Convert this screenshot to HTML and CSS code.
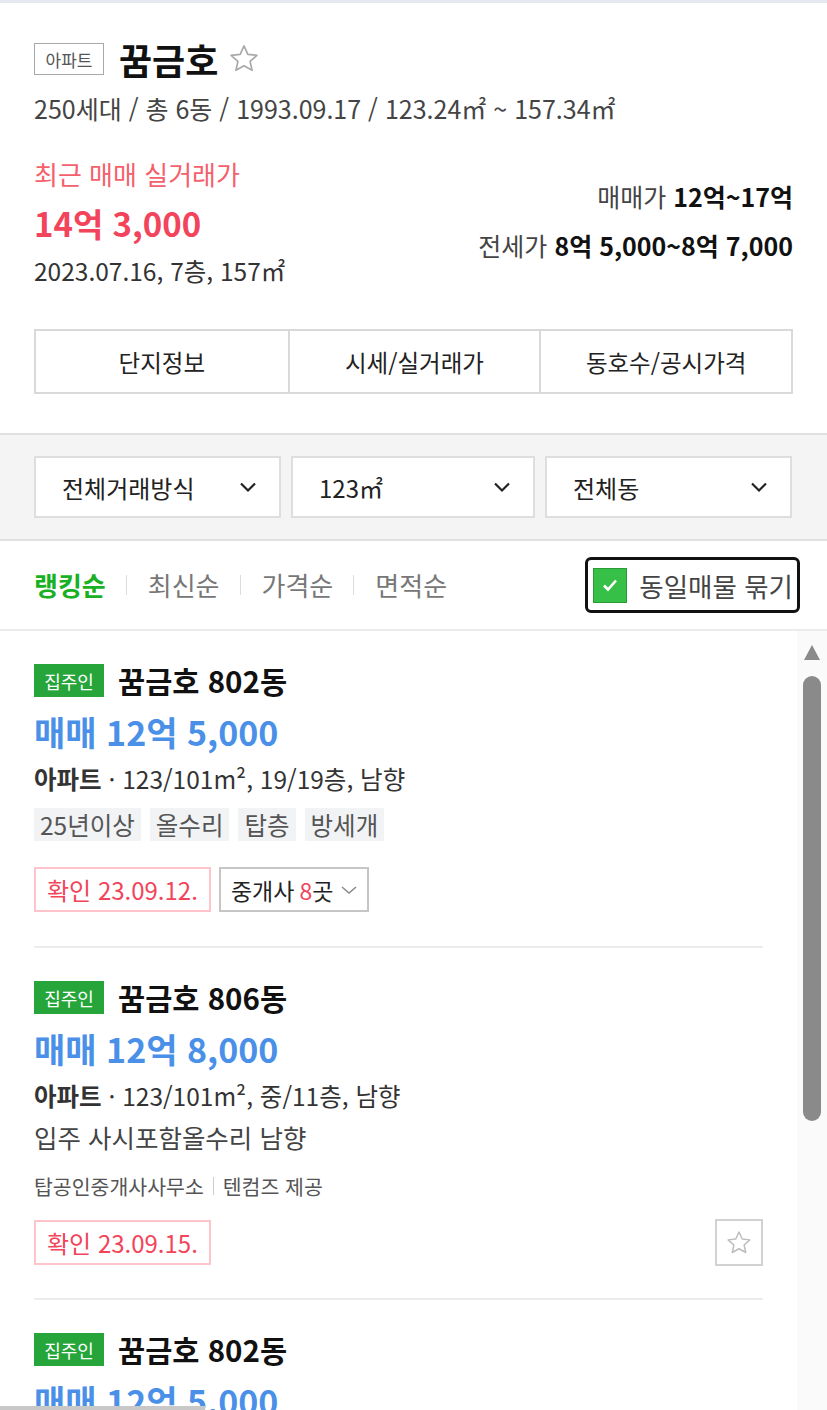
FILE: index.html
```html
<!DOCTYPE html>
<html lang="ko">
<head>
    <meta charset="UTF-8">
    <meta name="viewport" content="width=device-width, initial-scale=1.0">
    <title>꿈금호 - 단지 매물</title>
    <link rel="stylesheet" href="styles.css">
</head>
<body>
    <div class="page">
        <!-- 단지 요약 -->
        <section class="summary">
            <div class="title-row">
                <span class="type-badge">아파트</span>
                <h1 class="complex-name">꿈금호</h1>
                <button class="fav-title" aria-label="관심단지">
                    <svg width="34" height="34" viewBox="0 0 24 24"><path d="M12 2.8l2.7 5.9 6.4.7-4.8 4.3 1.4 6.3L12 16.8 6.3 20l1.4-6.3-4.8-4.3 6.4-.7z" fill="none" stroke="#a9a9a9" stroke-width="1.2" stroke-linejoin="round"/></svg>
                </button>
            </div>
            <p class="spec">250세대 / 총 6동 / 1993.09.17 / 123.24㎡ ~ 157.34㎡</p>

            <div class="price-row">
                <div class="recent">
                    <p class="recent-label">최근 매매 실거래가</p>
                    <p class="recent-price">14억 3,000</p>
                    <p class="recent-meta">2023.07.16, 7층, 157㎡</p>
                </div>
                <div class="ranges">
                    <p><span class="range-label">매매가</span> <strong>12억~17억</strong></p>
                    <p><span class="range-label">전세가</span> <strong>8억 5,000~8억 7,000</strong></p>
                </div>
            </div>

            <nav class="tabs">
                <a href="#">단지정보</a>
                <a href="#">시세/실거래가</a>
                <a href="#">동호수/공시가격</a>
            </nav>
        </section>

        <!-- 필터 -->
        <section class="filters">
            <button class="select">전체거래방식<svg class="chev" width="18" height="12" viewBox="0 0 18 12"><path d="M2 2.5l7 7 7-7" fill="none" stroke="#222" stroke-width="2.2"/></svg></button>
            <button class="select">123㎡<svg class="chev" width="18" height="12" viewBox="0 0 18 12"><path d="M2 2.5l7 7 7-7" fill="none" stroke="#222" stroke-width="2.2"/></svg></button>
            <button class="select">전체동<svg class="chev" width="18" height="12" viewBox="0 0 18 12"><path d="M2 2.5l7 7 7-7" fill="none" stroke="#222" stroke-width="2.2"/></svg></button>
        </section>

        <!-- 정렬 -->
        <div class="sort-bar">
            <ul class="sorts">
                <li class="active">랭킹순</li>
                <li>최신순</li>
                <li>가격순</li>
                <li>면적순</li>
            </ul>
            <label class="group-check">
                <span class="box"><svg width="22" height="22" viewBox="0 0 22 22"><path d="M5 11.5l4 4 8-9" fill="none" stroke="#fff" stroke-width="2.6"/></svg></span>
                동일매물 묶기
            </label>
        </div>

        <!-- 매물 목록 -->
        <div class="list-wrap">
            <ul class="articles">
                <li class="article">
                    <div class="article-title"><span class="owner-badge">집주인</span><h2>꿈금호 802동</h2></div>
                    <p class="article-price">매매 12억 5,000</p>
                    <p class="article-spec"><strong>아파트</strong> · 123/101m², 19/19층, 남향</p>
                    <div class="tags">
                        <span>25년이상</span><span>올수리</span><span>탑층</span><span>방세개</span>
                    </div>
                    <div class="article-foot">
                        <span class="confirm">확인 23.09.12.</span>
                        <button class="agents">중개사 <em>8</em>곳<svg width="18" height="10" viewBox="0 0 18 10"><path d="M2 2l7 6 7-6" fill="none" stroke="#888" stroke-width="1.5"/></svg></button>
                    </div>
                </li>
                <li class="article">
                    <div class="article-title"><span class="owner-badge">집주인</span><h2>꿈금호 806동</h2></div>
                    <p class="article-price">매매 12억 8,000</p>
                    <p class="article-spec"><strong>아파트</strong> · 123/101m², 중/11층, 남향</p>
                    <p class="article-desc">입주 사시포함올수리 남향</p>
                    <p class="agency">탑공인중개사사무소<span class="bar"></span>텐컴즈 제공</p>
                    <div class="article-foot">
                        <span class="confirm">확인 23.09.15.</span>
                        <button class="fav-item" aria-label="관심매물">
                            <svg width="30" height="30" viewBox="0 0 24 24"><path d="M12 3.2l2.6 5.6 6.1.7-4.6 4.1 1.3 6L12 16.6 6.6 19.6l1.3-6-4.6-4.1 6.1-.7z" fill="none" stroke="#bdbdbd" stroke-width="1.2" stroke-linejoin="round"/></svg>
                        </button>
                    </div>
                </li>
                <li class="article">
                    <div class="article-title"><span class="owner-badge">집주인</span><h2>꿈금호 802동</h2></div>
                    <p class="article-price">매매 12억 5,000</p>
                </li>
            </ul>
            <div class="scrollbar">
                <span class="scroll-up"></span>
                <span class="scroll-thumb"></span>
            </div>
        </div>
        <div class="hscroll"></div>
    </div>
</body>
</html>
```

FILE: styles.css
```css
:root {
    --red: #f2445a;
    --blue: #4a90e8;
    --green: #25a53a;
}

* {
    margin: 0;
    padding: 0;
    box-sizing: border-box;
}

body {
    font-family: 'Noto Sans CJK KR', 'Noto Sans', sans-serif;
    color: #222;
    background: #fff;
    overflow: hidden;
}

ul {
    list-style: none;
}

button {
    font-family: inherit;
    background: none;
    border: none;
    cursor: pointer;
}

.page {
    position: relative;
    width: 827px;
    height: 1410px;
    overflow: hidden;
    border-top: 3px solid #e6e8ef;
}

/* 단지 요약 */
.summary {
    padding: 40px 34px 39px;
}

.title-row {
    display: flex;
    align-items: center;
    height: 32px;
}

.type-badge {
    display: inline-flex;
    align-items: center;
    justify-content: center;
    width: 70px;
    height: 32px;
    border: 1px solid #a8a8a8;
    font-size: 17px;
    color: #555;
}

.complex-name {
    margin-left: 15px;
    font-size: 36px;
    font-weight: 700;
    line-height: 1;
    color: #111;
}

.fav-title {
    display: flex;
    margin-left: 9px;
}

.spec {
    margin-top: 18px;
    font-size: 25px;
    line-height: 30px;
    color: #444;
}

.price-row {
    display: flex;
    justify-content: space-between;
    align-items: flex-start;
    margin-top: 35px;
}

.recent-label {
    font-size: 26px;
    line-height: 32px;
    color: #f4606c;
}

.recent-price {
    margin-top: 13px;
    font-size: 33px;
    font-weight: 700;
    line-height: 40px;
    color: var(--red);
}

.recent-meta {
    margin-top: 13px;
    font-size: 24.5px;
    line-height: 30px;
    color: #333;
}

.ranges {
    margin-top: 23px;
    text-align: right;
    font-size: 25px;
    line-height: 30px;
}

.ranges p + p {
    margin-top: 19px;
}

.range-label {
    color: #444;
}

.ranges strong {
    color: #111;
}

.tabs {
    display: grid;
    grid-template-columns: repeat(3, 1fr);
    margin-top: 43px;
    border: 2px solid #d9d9d9;
    height: 65px;
}

.tabs a {
    display: flex;
    align-items: center;
    justify-content: center;
    font-size: 23.5px;
    color: #222;
    text-decoration: none;
}

.tabs a + a {
    border-left: 2px solid #d9d9d9;
}

/* 필터 */
.filters {
    display: grid;
    grid-template-columns: 247px 244px 247px;
    gap: 10px;
    padding: 21px 34px;
    background: #f4f4f4;
    border-top: 2px solid #e0e0e0;
    border-bottom: 2px solid #e0e0e0;
}

.select {
    display: flex;
    align-items: center;
    justify-content: space-between;
    height: 62px;
    padding: 0 22px 0 26px;
    background: #fff;
    border: 2px solid #dedede;
    font-size: 24px;
    color: #222;
}

/* 정렬 */
.sort-bar {
    display: flex;
    align-items: center;
    justify-content: space-between;
    height: 90px;
    padding: 0 27px 0 34px;
    border-bottom: 2px solid #ebebeb;
}

.sorts {
    display: flex;
    align-items: center;
}

.sorts li {
    display: flex;
    align-items: center;
    font-size: 26px;
    line-height: 32px;
    color: #777;
}

.sorts li + li::before {
    content: '';
    width: 1px;
    height: 20px;
    margin: 0 21px 0 20px;
    background: #dcdcdc;
}

.sorts li.active {
    color: #19b024;
    font-weight: 700;
}

.group-check {
    display: flex;
    align-items: center;
    gap: 12px;
    height: 56px;
    padding: 0 4px 0 5px;
    border: 3px solid #111;
    border-radius: 6px;
    font-size: 26.5px;
    color: #444;
}

.group-check .box {
    display: flex;
    align-items: center;
    justify-content: center;
    width: 34px;
    height: 35px;
    background: #37c047;
    border: 1px solid #2b9a37;
}

/* 매물 목록 */
.list-wrap {
    display: flex;
}

.articles {
    flex: 1;
    padding: 0 34px;
}

.article {
    padding: 33px 0 34px;
    border-bottom: 2px solid #ececec;
}

.article:nth-child(2) {
    padding-bottom: 32px;
}

.article-title {
    display: flex;
    align-items: center;
    gap: 14px;
}

.owner-badge {
    display: inline-flex;
    align-items: center;
    justify-content: center;
    width: 70px;
    height: 33px;
    background: var(--green);
    color: #fff;
    font-size: 18px;
}

.article-title h2 {
    font-size: 29.5px;
    font-weight: 700;
    line-height: 1;
    color: #111;
}

.article-price {
    margin-top: 15px;
    font-size: 34px;
    font-weight: 700;
    line-height: 40px;
    color: var(--blue);
}

.article-spec {
    margin-top: 12px;
    font-size: 24.5px;
    line-height: 30px;
    color: #333;
}

.article-spec strong {
    font-weight: 700;
}

.tags {
    display: flex;
    gap: 9px;
    margin-top: 14px;
}

.tags span {
    display: inline-flex;
    align-items: center;
    height: 33px;
    padding: 0 6px;
    background: #f2f3f5;
    font-size: 24.5px;
    color: #555;
}

.article-desc {
    margin-top: 11px;
    font-size: 25.5px;
    line-height: 30px;
    color: #444;
}

.agency {
    display: flex;
    align-items: center;
    margin-top: 21px;
    font-size: 20.5px;
    line-height: 26px;
    color: #555;
}

.agency .bar {
    width: 1px;
    height: 18px;
    margin: 0 9px;
    background: #ccc;
}

.article-foot {
    display: flex;
    align-items: center;
    gap: 8px;
    margin-top: 26px;
}

.article:nth-child(2) .article-foot {
    margin-top: 20px;
}

.confirm {
    display: inline-flex;
    align-items: center;
    height: 45px;
    padding: 0 11px;
    border: 2px solid #ffc4cb;
    font-size: 24px;
    color: var(--red);
}

.agents {
    display: inline-flex;
    align-items: center;
    gap: 7px;
    height: 45px;
    padding: 0 9px 0 10px;
    border: 2px solid #c6c6c6;
    font-size: 23px;
    color: #222;
}

.agents em {
    font-style: normal;
    color: var(--red);
    margin: 0 -7px 0 -2px;
}

.fav-item {
    display: flex;
    align-items: center;
    justify-content: center;
    width: 48px;
    height: 47px;
    margin-left: auto;
    border: 2px solid #d2d2d2;
}

/* 세로 스크롤바 */
.scrollbar {
    display: flex;
    flex-direction: column;
    align-items: center;
    width: 30px;
    padding-top: 14px;
    background: #fafafa;
}

.scroll-up {
    width: 0;
    height: 0;
    border-left: 8px solid transparent;
    border-right: 8px solid transparent;
    border-bottom: 15px solid #8a8a8a;
}

.scroll-thumb {
    width: 18px;
    height: 445px;
    margin-top: 16px;
    border-radius: 9px;
    background: #8a8a8a;
}

.hscroll {
    position: absolute;
    left: 0;
    bottom: 0;
    width: 205px;
    height: 4px;
    background: #c8c8c8;
}
```
